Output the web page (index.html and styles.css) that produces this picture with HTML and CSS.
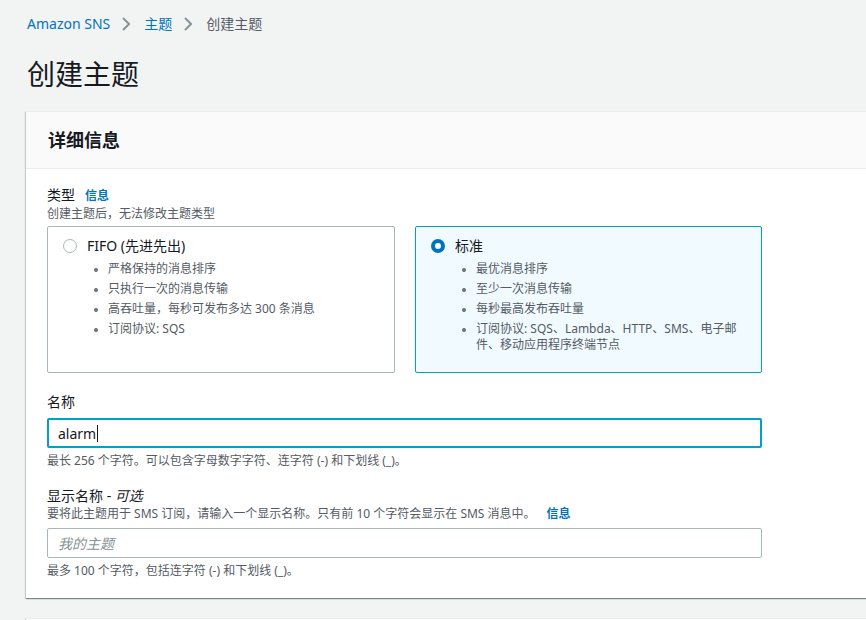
FILE: index.html
```html
<!DOCTYPE html>
<html lang="zh-CN">
<head>
<meta charset="utf-8">
<title>创建主题</title>
<link rel="stylesheet" href="styles.css">
</head>
<body>
<div class="page">
  <nav class="breadcrumb">
    <a class="crumb-link">Amazon SNS</a>
    <svg class="chev" width="8" height="14" viewBox="0 0 8 14"><polyline points="1,1 7,7 1,13" fill="none" stroke="#879596" stroke-width="2"/></svg>
    <a class="crumb-link">主题</a>
    <svg class="chev" width="8" height="14" viewBox="0 0 8 14"><polyline points="1,1 7,7 1,13" fill="none" stroke="#879596" stroke-width="2"/></svg>
    <span class="crumb-current">创建主题</span>
  </nav>
  <h1 class="title">创建主题</h1>

  <section class="card">
    <div class="card-header">详细信息</div>
    <div class="card-body">
      <div class="form">
        <div class="label-row"><span class="label">类型</span><a class="info">信息</a></div>
        <div class="desc">创建主题后，无法修改主题类型</div>
        <div class="tiles">
          <div class="tile">
            <div class="tile-head"><span class="radio"></span><span class="tile-title">FIFO (先进先出)</span></div>
            <ul class="tile-list">
              <li>严格保持的消息排序</li>
              <li>只执行一次的消息传输</li>
              <li>高吞吐量，每秒可发布多达 300 条消息</li>
              <li>订阅协议: SQS</li>
            </ul>
          </div>
          <div class="tile selected">
            <div class="tile-head"><span class="radio checked"></span><span class="tile-title">标准</span></div>
            <ul class="tile-list">
              <li>最优消息排序</li>
              <li>至少一次消息传输</li>
              <li>每秒最高发布吞吐量</li>
              <li>订阅协议: SQS、Lambda、HTTP、SMS、电子邮件、移动应用程序终端节点</li>
            </ul>
          </div>
        </div>

        <div class="field-label name-label">名称</div>
        <div class="input focused"><span class="value">alarm</span><span class="caret"></span></div>
        <div class="hint">最长 256 个字符。可以包含字母数字字符、连字符 (-) 和下划线 (_)。</div>

        <div class="field-label display-label">显示名称 - <i>可选</i></div>
        <div class="desc">要将此主题用于 SMS 订阅，请输入一个显示名称。只有前 10 个字符会显示在 SMS 消息中。<a class="info info-inline">信息</a></div>
        <div class="input plain"><span class="placeholder">我的主题</span></div>
        <div class="hint">最多 100 个字符，包括连字符 (-) 和下划线 (_)。</div>
      </div>
    </div>
  </section>

  <section class="card next-card"></section>
</div>
</body>
</html>
```

FILE: styles.css
```css
html, body {
  margin: 0;
  padding: 0;
}
body {
  background: #f2f3f3;
  font-family: "Noto Sans", "Noto Sans CJK SC", sans-serif;
  color: #16191f;
  overflow: hidden;
  width: 866px;
  height: 620px;
}
.page {
  padding: 13px 0 0 26px;
  width: 880px;
}
.breadcrumb {
  display: flex;
  align-items: center;
  font-size: 14px;
  line-height: 22px;
  padding-left: 1px;
}
.crumb-link {
  color: #0073bb;
}
.chev {
  margin: 0 14px 0 12px;
}
.crumb-current {
  color: #545b64;
}
.title {
  margin: 21px 0 19px 1px;
  font-size: 28px;
  line-height: 36px;
  font-weight: 400;
}
.card {
  background: #fff;
  box-shadow: 0 1px 1px 0 rgba(0, 28, 36, 0.3), 1px 1px 1px 0 rgba(0, 28, 36, 0.15), -1px 1px 1px 0 rgba(0, 28, 36, 0.15);
  border-top: 1px solid #eaeded;
}
.card-header {
  background: #fafafa;
  border-bottom: 1px solid #eaeded;
  padding: 17px 20px 17px 22px;
  font-size: 18px;
  line-height: 22px;
  font-weight: 700;
}
.card-body {
  padding: 16px 20px 19px 21px;
}
.form {
  width: 715px;
}
.label-row {
  display: flex;
  align-items: baseline;
  line-height: 20px;
}
.label {
  font-size: 14px;
}
.info {
  color: #0073bb;
  font-size: 12px;
  font-weight: 700;
  margin-left: 10px;
}
.info-inline {
  margin-left: 11px;
}
.desc {
  font-size: 12px;
  line-height: 16px;
  color: #545b64;
}
.tiles {
  display: grid;
  grid-template-columns: 348px 347px;
  column-gap: 20px;
  margin-top: 4px;
}
.tile {
  border: 1px solid #aab7b8;
  border-radius: 2px;
  padding: 8px 20px 19px 15px;
}
.tile.selected {
  border-color: #00a1c9;
  background: #f1faff;
}
.tile-head {
  display: flex;
  align-items: center;
  font-size: 14px;
  line-height: 22px;
}
.radio {
  box-sizing: border-box;
  width: 14px;
  height: 14px;
  border-radius: 50%;
  border: 1.5px solid #aab7b8;
  background: #fff;
  margin-right: 10px;
}
.radio.checked {
  border: 4px solid #0073bb;
}
.tile-title {
  color: #16191f;
}
.tile-list {
  margin: 4px 0 0 0;
  padding-left: 45px;
  font-size: 12px;
  line-height: 16px;
  color: #545b64;
}
.tile-list li {
  margin-top: 4px;
}
.tile-list li:first-child {
  margin-top: 0;
}
.tile-list li::marker {
  color: #687078;
  font-size: 10px;
}
.field-label {
  font-size: 14px;
  line-height: 22px;
}
.name-label {
  margin-top: 18px;
  line-height: 22px;
}
.display-label {
  margin-top: 17px;
  line-height: 20px;
}
.field-label i {
  font-style: italic;
}
.input {
  box-sizing: border-box;
  height: 30px;
  border-radius: 2px;
  display: flex;
  align-items: center;
  font-size: 14px;
  background: #fff;
}
.input.focused {
  margin-top: 5px;
  border: 2px solid #00a1c9;
  padding-left: 9px;
}
.input.plain {
  margin-top: 6px;
  border: 1px solid #aab7b8;
  padding-left: 10px;
}
.value {
  color: #16191f;
}
.caret {
  width: 1px;
  height: 17px;
  background: #16191f;
  margin-left: 1px;
}
.placeholder {
  color: #879596;
  font-style: italic;
}
.hint {
  margin-top: 5px;
  font-size: 12px;
  line-height: 16px;
  color: #545b64;
}
.next-card {
  margin-top: 20px;
  height: 40px;
}
```
